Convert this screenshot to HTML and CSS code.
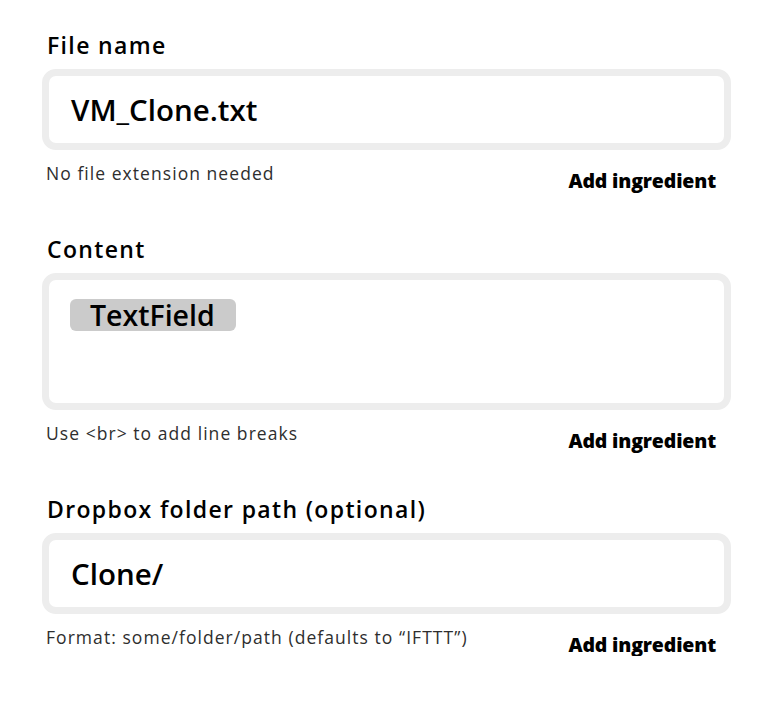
FILE: index.html
```html
<!DOCTYPE html>
<html>
<head>
<meta charset="utf-8">
<link rel="stylesheet" href="styles.css">
</head>
<body>
<div class="form">
  <div class="field">
    <div class="label">File name</div>
    <div class="box">VM_Clone.txt</div>
    <div class="hint-row">
      <span class="hint">No file extension needed</span>
      <span class="add">Add ingredient</span>
    </div>
  </div>
  <div class="field">
    <div class="label">Content</div>
    <div class="box box-tall"><span class="pill">TextField</span></div>
    <div class="hint-row">
      <span class="hint">Use &lt;br&gt; to add line breaks</span>
      <span class="add">Add ingredient</span>
    </div>
  </div>
  <div class="field">
    <div class="label">Dropbox folder path (optional)</div>
    <div class="box">Clone/</div>
    <div class="hint-row">
      <span class="hint">Format: some/folder/path (defaults to “IFTTT”)</span>
      <span class="add">Add ingredient</span>
    </div>
  </div>
</div>
</body>
</html>
```
FILE: styles.css
```css
* { box-sizing: border-box; }
html, body {
  margin: 0;
  background: #ffffff;
}
body {
  font-family: "Open Sans", "Noto Sans", sans-serif;
  color: #000;
}
.form {
  width: 762px;
  padding: 32px 31px 0 42px;
  display: flex;
  flex-direction: column;
  gap: 44px;
}
.field {
  display: flex;
  flex-direction: column;
}
.label {
  font-size: 23px;
  line-height: 26px;
  font-weight: 600;
  letter-spacing: 1.35px;
  margin-left: 5px;
  margin-bottom: 11px;
}
.box {
  height: 81px;
  border: 7px solid #ededed;
  border-radius: 14px;
  display: flex;
  align-items: center;
  padding-left: 22px;
  font-size: 29.5px;
  font-weight: 600;
}
.box-tall {
  height: 137px;
  align-items: flex-start;
  padding-top: 19px;
  padding-left: 21px;
}
.pill {
  background: #cbcbcb;
  border-radius: 6px;
  height: 32px;
  line-height: 32px;
  padding: 0 21px 0 20px;
  font-size: 28.5px;
  display: inline-block;
}
.hint-row {
  display: flex;
  justify-content: space-between;
  align-items: flex-start;
  margin-top: 12px;
}
.hint {
  font-size: 17.5px;
  line-height: 22px;
  letter-spacing: 1.05px;
  color: #2e2e2e;
  margin-left: 4px;
}
.add {
  font-size: 19.5px;
  line-height: 22px;
  font-weight: 800;
  letter-spacing: -0.15px;
  margin-top: 8px;
  margin-right: 15px;
}
```
